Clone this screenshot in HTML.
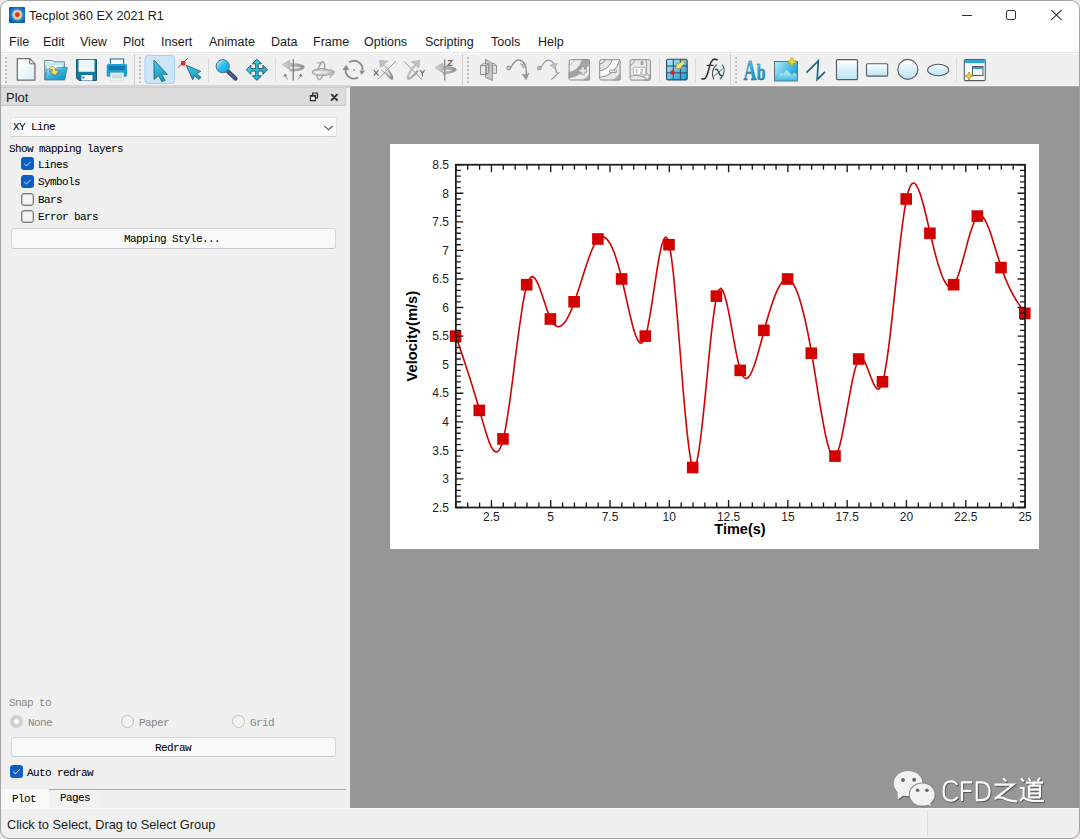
<!DOCTYPE html>
<html><head><meta charset="utf-8">
<style>
*{margin:0;padding:0;box-sizing:border-box}
html,body{width:1080px;height:839px;overflow:hidden;background:#ebe8e6}
body{position:relative;font-family:"Liberation Sans",sans-serif;color:#000}
.a{position:absolute}
.ui{font-family:"Liberation Sans",sans-serif;font-size:12.5px;color:#1a1a1a;white-space:nowrap}
.mono{font-family:"Liberation Mono",monospace;font-size:11px;line-height:12px;letter-spacing:-0.6px;white-space:nowrap;color:#000;-webkit-text-stroke:0.05px currentColor}
#win{position:absolute;left:0;top:0;width:1080px;height:839px;border-radius:9px;overflow:hidden;background:#fff}
#bd{position:absolute;left:0;top:0;width:1080px;height:839px;border:1px solid #a4a4a4;border-radius:9px;pointer-events:none}
</style></head><body>
<div id="win">
<!-- title bar -->
<svg class="a" style="left:9px;top:7px" width="16" height="16" viewBox="0 0 16 16">
 <defs><radialGradient id="tg" cx="0.52" cy="0.48" r="0.62"><stop offset="0" stop-color="#ff4040"/><stop offset="0.17" stop-color="#e01c1c"/><stop offset="0.27" stop-color="#f0a878"/><stop offset="0.37" stop-color="#f0e48c"/><stop offset="0.5" stop-color="#5ab4e0"/><stop offset="0.64" stop-color="#1a76c6"/><stop offset="1" stop-color="#0a56a6"/></radialGradient></defs>
 <rect x="0" y="0" width="16" height="16" rx="1" fill="url(#tg)"/>
</svg>
<div class="a ui" style="left:29px;top:9px;font-size:12.5px">Tecplot 360 EX 2021 R1</div>
<!-- window controls -->
<div class="a" style="left:962px;top:15px;width:10px;height:1px;background:#333"></div>
<div class="a" style="left:1006px;top:10px;width:10px;height:10px;border:1px solid #333;border-radius:2px"></div>
<svg class="a" style="left:1050px;top:9px" width="13" height="12" viewBox="0 0 13 12"><path d="M1.3 1.1 L11.6 10.9 M11.6 1.1 L1.3 10.9" stroke="#333" stroke-width="1.1"/></svg>

<!-- menu -->
<div class="a ui" style="left:9px;top:35px">File</div>
<div class="a ui" style="left:43px;top:35px">Edit</div>
<div class="a ui" style="left:80px;top:35px">View</div>
<div class="a ui" style="left:123px;top:35px">Plot</div>
<div class="a ui" style="left:161px;top:35px">Insert</div>
<div class="a ui" style="left:209px;top:35px">Animate</div>
<div class="a ui" style="left:271px;top:35px">Data</div>
<div class="a ui" style="left:313px;top:35px">Frame</div>
<div class="a ui" style="left:364px;top:35px">Options</div>
<div class="a ui" style="left:425px;top:35px">Scripting</div>
<div class="a ui" style="left:491px;top:35px">Tools</div>
<div class="a ui" style="left:538px;top:35px">Help</div>

<!-- toolbar -->
<div class="a" style="left:0;top:52px;width:1080px;height:1px;background:#e9e9e9"></div>
<div class="a" style="left:0;top:53px;width:1080px;height:1px;background:#fbfbfb"></div>
<div class="a" style="left:0;top:54px;width:1080px;height:32px;background:#f0f0f0"></div>
<svg class="a" style="left:0;top:0" width="1080" height="90" viewBox="0 0 1080 90">
<defs>
 <linearGradient id="docg" x1="0" y1="0" x2="1" y2="1"><stop offset="0.2" stop-color="#ffffff"/><stop offset="1" stop-color="#d6ecf6"/></linearGradient>
 <linearGradient id="fold" x1="0" y1="0" x2="0" y2="1"><stop offset="0" stop-color="#5cc4e4"/><stop offset="1" stop-color="#0a8cc8"/></linearGradient>
 <linearGradient id="teal" x1="0" y1="0" x2="0" y2="1"><stop offset="0" stop-color="#48c8e6"/><stop offset="1" stop-color="#1496c4"/></linearGradient>
 <linearGradient id="lens" x1="0" y1="0" x2="1" y2="1"><stop offset="0" stop-color="#d4f4ff"/><stop offset="0.5" stop-color="#27bdf0"/><stop offset="1" stop-color="#0ea6e6"/></linearGradient>
 <linearGradient id="shp" x1="0" y1="0" x2="0" y2="1"><stop offset="0" stop-color="#ffffff"/><stop offset="1" stop-color="#b7e3f4"/></linearGradient>
 <linearGradient id="grid" x1="0" y1="0" x2="1" y2="1"><stop offset="0" stop-color="#b6ecfb"/><stop offset="1" stop-color="#149ed6"/></linearGradient>
 <linearGradient id="gray" x1="0" y1="0" x2="1" y2="1"><stop offset="0" stop-color="#e8e8e8"/><stop offset="1" stop-color="#9a9a9a"/></linearGradient>
</defs>
<!-- toolbar frame lines -->
<rect x="0" y="85" width="350" height="3" fill="#d6d6d6"/><rect x="0" y="87" width="350" height="1" fill="#cdcdcd"/><rect x="350" y="85" width="730" height="1" fill="#f3f3f3"/>
<!-- grips -->
<g fill="#a6a6a6" transform="translate(0.3,0.3)">
 <rect x="5" y="57" width="1.6" height="1.6"/><rect x="5" y="61" width="1.6" height="1.6"/><rect x="5" y="65" width="1.6" height="1.6"/><rect x="5" y="69" width="1.6" height="1.6"/><rect x="5" y="73" width="1.6" height="1.6"/><rect x="5" y="77" width="1.6" height="1.6"/><rect x="5" y="81" width="1.6" height="1.6"/>
 <rect x="139" y="57" width="1.6" height="1.6"/><rect x="139" y="61" width="1.6" height="1.6"/><rect x="139" y="65" width="1.6" height="1.6"/><rect x="139" y="69" width="1.6" height="1.6"/><rect x="139" y="73" width="1.6" height="1.6"/><rect x="139" y="77" width="1.6" height="1.6"/><rect x="139" y="81" width="1.6" height="1.6"/>
 <rect x="467" y="57" width="1.6" height="1.6"/><rect x="467" y="61" width="1.6" height="1.6"/><rect x="467" y="65" width="1.6" height="1.6"/><rect x="467" y="69" width="1.6" height="1.6"/><rect x="467" y="73" width="1.6" height="1.6"/><rect x="467" y="77" width="1.6" height="1.6"/><rect x="467" y="81" width="1.6" height="1.6"/>
 <rect x="735" y="57" width="1.6" height="1.6"/><rect x="735" y="61" width="1.6" height="1.6"/><rect x="735" y="65" width="1.6" height="1.6"/><rect x="735" y="69" width="1.6" height="1.6"/><rect x="735" y="73" width="1.6" height="1.6"/><rect x="735" y="77" width="1.6" height="1.6"/><rect x="735" y="81" width="1.6" height="1.6"/>
</g>
<!-- toolbar separators (end of toolbars) -->
<g fill="#d0d0d0">
 <rect x="134" y="53" width="1" height="32"/>
 <rect x="462" y="53" width="1" height="32"/>
 <rect x="730" y="53" width="1" height="32"/>
</g>
<g fill="#dcdcdc">
 <rect x="208" y="58" width="1" height="24"/>
 <rect x="275" y="58" width="1" height="24"/>
 <rect x="659" y="58" width="1" height="24"/>
 <rect x="695" y="58" width="1" height="24"/>
 <rect x="956" y="58" width="1" height="24"/>
</g>
<!-- new doc -->
<path d="M17.3,58.6 H29.6 L34.9,63.9 V80.2 H17.3 Z" fill="url(#docg)" stroke="#6e6e6e" stroke-width="1.3" stroke-linejoin="round"/>
<path d="M29.6,58.8 V63.8 H34.7 Z" fill="#dfeef2" stroke="#5e6a6c" stroke-width="0.9" stroke-linejoin="round"/>
<!-- open folder -->
<defs>
 <linearGradient id="fback" x1="0" y1="0" x2="0" y2="1"><stop offset="0" stop-color="#e6fcff"/><stop offset="0.4" stop-color="#7ad8ea"/><stop offset="1" stop-color="#2aa8cc"/></linearGradient>
 <linearGradient id="ffront" x1="0" y1="0" x2="1" y2="1"><stop offset="0" stop-color="#d6f4fb"/><stop offset="0.45" stop-color="#40b4e0"/><stop offset="1" stop-color="#0088c8"/></linearGradient>
 <linearGradient id="farrow" x1="0" y1="0" x2="0" y2="1"><stop offset="0" stop-color="#fff4b0"/><stop offset="1" stop-color="#f0d020"/></linearGradient>
</defs>
<path d="M44.6,60.5 H52.8 L54,61.8 H64.4 V79.8 H44.6 Z" fill="url(#fback)" stroke="#6a7e86" stroke-width="0.9" stroke-linejoin="round"/>
<rect x="46.9" y="65" width="15.2" height="4" fill="#ffffff"/>
<path d="M44.8,79.8 L47.2,69 H55 L57.5,67.4 H67.3 L64.8,79.8 Z" fill="url(#ffront)" stroke="#4a7a90" stroke-width="0.7" stroke-linejoin="round"/>
<path d="M49.2,68.2 Q50.8,65.6 53.5,66.6 Q55.2,67.6 55.6,70.6 L59.4,70.4 L54.9,75.6 L49.3,71.2 L52.8,71 Q52.6,69 50.6,69.4 Z" fill="url(#farrow)" stroke="#6a6030" stroke-width="0.6" stroke-linejoin="round"/>
<!-- save -->
<path d="M76.5,59.5 H96.5 V80.5 H79 L76.5,78 Z" fill="#137a9c" stroke="#0e5c78" stroke-width="1"/>
<rect x="78.5" y="59.8" width="16" height="12" fill="#eaf6f8"/>
<rect x="81.5" y="75" width="11" height="5.5" fill="#ffffff"/>
<rect x="82.5" y="76.5" width="2" height="2" fill="#137a9c"/>
<!-- print -->
<rect x="110.4" y="59" width="13.2" height="5.5" fill="#ffffff" stroke="#1a7698" stroke-width="1.1"/>
<rect x="106.7" y="64" width="20.3" height="12.8" rx="1.5" fill="#1e9fd8"/>
<rect x="108.5" y="66" width="16.5" height="4" fill="#147aa8"/>
<rect x="110.5" y="73" width="13" height="7.8" fill="#f4f6f6" stroke="#d6dcdc" stroke-width="0.8"/>
<rect x="112" y="74.5" width="10" height="4" fill="#c9dcdc"/>
<!-- select (active) -->
<rect x="145" y="55.5" width="29.5" height="28" rx="3" fill="#cce6f8" stroke="#9fd2f8" stroke-width="1"/>
<path d="M154,60 V79.5 L158.5,75.5 L162,81.8 L165,80.3 L161.5,74 L167.4,74.4 Z" fill="url(#teal)" stroke="#22607a" stroke-width="0.85" stroke-linejoin="round"/>
<!-- select2 -->
<path d="M178,67.5 L188,58" stroke="#333" stroke-width="0.8"/>
<rect x="181" y="61" width="4.5" height="4.5" rx="1" fill="#e8281e"/>
<path d="M186.2,65.2 L192.7,79.8 L194.5,75.8 L199,79.5 L201,77.2 L196.6,73.6 L200.8,71.4 Z" fill="url(#teal)" stroke="#22607a" stroke-width="0.85" stroke-linejoin="round"/>
<!-- zoom -->
<path d="M227.5,71 L235.5,78.5" stroke="#2a3550" stroke-width="4.2" stroke-linecap="round"/>
<path d="M227.5,71 L235.5,78.5" stroke="#4a5c90" stroke-width="2.4" stroke-linecap="round"/>
<circle cx="222.7" cy="66.2" r="6.6" fill="url(#lens)" stroke="#4a6070" stroke-width="0.9"/>
<!-- move -->
<defs><linearGradient id="mvg" x1="0" y1="0" x2="1" y2="1"><stop offset="0" stop-color="#50d8ea"/><stop offset="1" stop-color="#10a0d8"/></linearGradient></defs>
<path d="M256.90,59.20 L261.50,63.80 L258.15,63.80 L258.15,68.55 L262.90,68.55 L262.90,65.20 L267.50,69.80 L262.90,74.40 L262.90,71.05 L258.15,71.05 L258.15,75.80 L261.50,75.80 L256.90,80.40 L252.30,75.80 L255.65,75.80 L255.65,71.05 L250.90,71.05 L250.90,74.40 L246.30,69.80 L250.90,65.20 L250.90,68.55 L255.65,68.55 L255.65,63.80 L252.30,63.80Z" fill="url(#mvg)" stroke="#22505c" stroke-width="0.9" stroke-linejoin="miter"/>
<!-- rotate gray icons -->
<defs>
 <linearGradient id="ga" x1="0" y1="0" x2="1" y2="0"><stop offset="0" stop-color="#d4d4d4"/><stop offset="1" stop-color="#8e8e8e"/></linearGradient>
 <linearGradient id="gc" x1="0" y1="0" x2="1" y2="0"><stop offset="0" stop-color="#f0f0f0"/><stop offset="0.6" stop-color="#e0e0e0"/><stop offset="1" stop-color="#a0a0a0"/></linearGradient>
 <linearGradient id="gb" x1="0" y1="0" x2="1" y2="1"><stop offset="0" stop-color="#e0e0e0"/><stop offset="1" stop-color="#8a8a8a"/></linearGradient>
</defs>
<!-- rot1 -->
<path d="M282.4,64.7 L289.7,60 V63.2 Q300,63.3 303.8,65.8 Q306,68.5 300.5,70.2 Q296,71.2 290,71.2 V69.3 Q297,69 300,68 Q301.5,67.3 299.5,66.8 Q296,66.2 289.7,66.2 V69.4 Z" fill="url(#ga)" stroke="#9a9a9a" stroke-width="0.5"/>
<path d="M293.3,59.2 V80.6" stroke="#828282" stroke-width="1.4"/>
<path d="M285.2,73.5 L283.2,76.2 H287 Z M300.8,73.5 L298.9,76.2 H302.7 Z" fill="#7a7a7a"/>
<path d="M285.3,76 Q285.8,78 288,79.2 M300.7,76 Q300,78 297.8,79.2" fill="none" stroke="#8a8a8a" stroke-width="0.9"/>
<!-- rot2 -->
<path d="M316.8,63.3 L323.6,61.6" fill="none" stroke="#a8a8a8" stroke-width="1"/>
<ellipse cx="321" cy="70.8" rx="3" ry="9" transform="rotate(14 321 70.8)" fill="none" stroke="#a4a4a4" stroke-width="1.3"/>

<ellipse cx="321.5" cy="72.2" rx="9.3" ry="3.6" fill="none" stroke="#a2a2a2" stroke-width="1.1"/>
<path d="M314,70.3 H330.2 V68.9 L334.9,71.9 L330.2,77.8 V74.2 H314 Z" fill="url(#gc)" stroke="#a0a0a0" stroke-width="0.6"/>
<!-- rot3 -->
<g fill="none" stroke="#8c8c8c" stroke-width="1.9">
 <path d="M345.6,69.5 A8.4,8.4 0 0 0 358.2,77.4"/>
 <path d="M349.3,62.3 A8.4,8.4 0 0 1 362.4,70.2"/>
</g>
<path d="M346.1,64.8 L342.4,69.9 H349.3 Z M359.4,70.4 H365.3 L361.6,75 Z" fill="#8c8c8c"/>
<circle cx="354.2" cy="70" r="1.1" fill="#a0a0a0"/>
<!-- rot x -->
<path d="M378,79.4 L395.8,61.1" stroke="#8c8c8c" stroke-width="0.9"/>
<path d="M382.5,63.5 Q389,70 391.5,75.5 Q393,79 391.5,78.5 Q388.5,77 385.5,72.5" fill="none" stroke="url(#gb)" stroke-width="2.2"/>
<path d="M379.7,60.3 L388,61.3 L385.5,62.8 L382.5,66.5 L380,67 Z" fill="#c0c0c0" stroke="#a0a0a0" stroke-width="0.5"/>
<path d="M381.3,69.8 L385.6,73.6" stroke="#8c8c8c" stroke-width="0.9"/>
<path d="M373.8,70.2 L378.6,75.6 M378.6,70.2 L373.8,75.6" stroke="#6e6e6e" stroke-width="1.2"/>
<!-- rot y -->
<path d="M404.2,61.4 L421.9,79.7" stroke="#8c8c8c" stroke-width="0.9"/>
<path d="M416.5,63.5 Q411,69 408.5,74.5 Q407,79 408.5,78.8 Q412,78 418,70.5" fill="none" stroke="url(#gb)" stroke-width="2.2"/>
<path d="M419.7,60.3 L411.3,61.9 L414,63.5 L417,66.8 L419,67.5 Z" fill="#c0c0c0" stroke="#a0a0a0" stroke-width="0.5"/>
<path d="M420.2,70.2 L422.4,73.2 L424.6,70.2 M422.4,73.2 V76.2" fill="none" stroke="#6e6e6e" stroke-width="1.2"/>
<!-- rot z -->
<path d="M435,67.8 L442.8,63 V66 Q452,66.3 455.5,68.3 Q458,70.5 453,72.3 Q448,73.8 443.3,74.4 V72 Q449,71.5 452.5,70.5 Q453.5,69.8 451.5,69.5 Q448,69.2 442.8,69.6 V72.8 Z" fill="url(#ga)" stroke="#9a9a9a" stroke-width="0.5"/>
<path d="M444.7,59.2 V80.6" stroke="#8a8a8a" stroke-width="1.3"/>
<path d="M447.8,60.6 H452.2 L447.8,65.4 H452.4" fill="none" stroke="#6e6e6e" stroke-width="1.2"/>
<!-- slice -->
<g stroke="#7c7c7c" stroke-width="0.8" stroke-linejoin="round">
 <path d="M492.3,63.3 L494,63.3 L496.5,65.5 V73.3 H492.3 Z" fill="#dcdcdc"/>
 <path d="M492.3,65.5 H496.5" fill="none" stroke="#a0a0a0"/>
 <path d="M485.4,59.2 L492.3,63.3 V80.6 L485.4,77.2 Z" fill="#c8c8c8"/>
 <path d="M480.5,65.6 L483,63.8 H488.7 V72.6 L486,74.5 H480.5 Z" fill="#e6e6e6"/>
 <path d="M486,65.6 L488.7,63.8 V72.6 L486,74.5 Z" fill="#cfcfcf"/>
 <path d="M480.5,65.6 H486 V74.5" fill="none"/>
</g>
<!-- streamtrace 1 -->
<g fill="none" stroke="#8c8c8c">
 <rect x="507" y="66.3" width="3.6" height="3.5" rx="0.8" fill="#c8c8c8" stroke="#8a8a8a" stroke-width="0.9"/>
 <path d="M510.6,67.8 Q515,60 518.5,60 Q523,60 525.5,66 Q526.8,70 526.3,75" stroke-width="1.3"/>
 <path d="M520.3,63.6 L523.6,68.4 L526.6,63.3 L524.8,65.3 Z" fill="#bdbdbd" stroke="#9a9a9a" stroke-width="0.6"/>
 <path d="M522,74.2 L526.2,79.7 L529,73 L526.3,75 Z" fill="#9a9a9a" stroke="#8c8c8c" stroke-width="0.6"/>
</g>
<!-- streamtrace 2 -->
<g fill="none" stroke="#999">
 <rect x="537.5" y="66.3" width="3.6" height="3.5" rx="1" fill="#b8b8b8" stroke="#999" stroke-width="0.9"/>
 <path d="M541,67.5 Q545,59.8 548.7,60.2 Q552.7,60.6 554.8,66.2 Q556,70 556.5,73" stroke-width="1.3"/>
 <path d="M550.2,65.2 L557.6,63.3 L554.6,68.6 Z" fill="#c4c4c4" stroke="#a0a0a0" stroke-width="0.6"/>
 <path d="M559.2,72.3 L551.4,79.6" stroke-width="1.3"/>
</g>
<!-- contour add -->
<defs>
 <clipPath id="cb1"><rect x="568.6" y="59.2" width="21.4" height="21.3" rx="1.5"/></clipPath>
 <clipPath id="cb2"><rect x="599.2" y="59.2" width="21.4" height="21.3" rx="1.5"/></clipPath>
 <clipPath id="cb3"><rect x="629.6" y="59.2" width="21.3" height="21.4" rx="1.5"/></clipPath>
</defs>
<g clip-path="url(#cb1)">
 <rect x="568" y="58" width="23" height="23" fill="#ececec"/>
 <path d="M568,72 Q578,71.5 582.5,58.5 L590.5,58.5 V61 Q585,76 568,78.2 Z" fill="#a3a3a3"/>
 <path d="M568,64.5 Q573,64 575,58.5" fill="none" stroke="#7e7e7e" stroke-width="0.9"/>
 <path d="M582,81 L591,72.5 V81 Z" fill="#b2b2b2"/>
 <path d="M568,58 H575 Q573,64 568,64.5Z" fill="#f6f6f6"/>
</g>
<rect x="569.1" y="59.7" width="20.4" height="20.3" rx="1.5" fill="none" stroke="#8e8e8e" stroke-width="1"/>
<path d="M581.3,66.8 H584.3 V69.2 H586.7 V72.2 H584.3 V74.6 H581.3 V72.2 H578.9 V69.2 H581.3Z" fill="#e6e6e6" stroke="#8a8a8a" stroke-width="0.7" stroke-linejoin="round"/>
<!-- contour remove -->
<g clip-path="url(#cb2)">
 <rect x="598" y="58" width="23" height="23" fill="#e6e6e6"/>
 <path d="M598,71 Q609,70.5 612.8,58.5 H620 Q616,76 598,77.7Z" fill="#fbfbfb"/>
 <path d="M598,71 Q609,70.5 612.8,58.5 M598,77.7 Q616,76 620,58.5 M598,64.3 Q604,64 606.1,58.5" fill="none" stroke="#7e7e7e" stroke-width="0.9"/>
 <path d="M612,81 L621,72.5 V81 Z" fill="#b2b2b2"/>
</g>
<rect x="599.7" y="59.7" width="20.4" height="20.3" rx="1.5" fill="none" stroke="#8e8e8e" stroke-width="1"/>
<rect x="609.5" y="70" width="7" height="2.5" rx="0.6" fill="#e2e2e2" stroke="#808080" stroke-width="0.7"/>
<!-- contour label -->
<g clip-path="url(#cb3)">
 <rect x="629" y="58" width="23" height="23" fill="#e8e8e8"/>
 <path d="M629,66.5 Q633,65 636,58.5 M645,58.5 Q648,64 646.5,68 Q645,74 651,78 M629,76.5 Q636,74 642,76.5 Q647,78.5 651,75" fill="none" stroke="#8a8a8a" stroke-width="0.8"/>
 <path d="M643,81 L651.5,73 V81 Z" fill="#b8b8b8"/>
</g>
<rect x="630.1" y="59.7" width="20.3" height="20.4" rx="1.5" fill="none" stroke="#8e8e8e" stroke-width="1"/>
<path d="M641,61.5 h2 v3 h-2z" fill="#bbb" stroke="#888" stroke-width="0.6"/>
<rect x="633.4" y="67.3" width="12.3" height="7.5" rx="1.2" fill="#fdfdfd" stroke="#9a9a9a" stroke-width="0.7"/>
<path d="M636.8,69.2 V73.2 M636,69.9 L636.8,69.2 M640.4,69.9 Q641,69.1 641.8,69.2 Q642.8,69.4 642.5,70.5 L640.4,73.2 H642.8" fill="none" stroke="#808080" stroke-width="0.75"/>
<path d="M645.9,73.8 H648.1 V75.6 H649.9 V77.8 H648.1 V79.6 H645.9 V77.8 H644.1 V75.6 H645.9Z" fill="#f0f0f0" stroke="#8a8a8a" stroke-width="0.6" stroke-linejoin="round"/>
<!-- probe grid -->
<rect x="666.6" y="59.3" width="20.6" height="20.6" rx="1.5" fill="url(#grid)" stroke="#2e4664" stroke-width="1.1"/>
<path d="M673.3,59.5 V79.8 M680.4,59.5 V79.8 M666.8,66 H687 M666.8,72.9 H687" stroke="#2e4664" stroke-width="1"/>
<path d="M675.9,68.6 L676.8,62.8 L678.2,64.4 L682.6,60.6 L685,63.2 L680.7,67.2 L682.2,68.5 Z" fill="#f4e36a" stroke="#9a8a30" stroke-width="0.6" stroke-linejoin="round"/>
<circle cx="672.6" cy="72.5" r="2.2" fill="#e41c1c"/>
<!-- f(x) -->
<g fill="none" stroke-linecap="round">
 <path d="M717.2,59.8 Q713.5,57.8 711.2,61.8 Q710,64 708.6,70 Q707.4,75.5 705.5,78 Q704,79.6 701.8,78.8" stroke="#2e2e2e" stroke-width="1.5"/>
 <path d="M707.2,65.4 H713.2" stroke="#333" stroke-width="1.1"/>
 <path d="M716.4,64.9 Q710.2,71 713.6,79" stroke="#444" stroke-width="1.1"/>
 <path d="M715.8,69.4 Q717.5,69 718.2,71 L720,74.8 Q720.6,75.8 721.6,75.4" stroke="#1e5464" stroke-width="1.5"/>
 <path d="M722.4,69.2 L714.6,75.6" stroke="#2a6a7c" stroke-width="0.9"/>
 <path d="M722.6,65 Q726.8,72 720.2,79" stroke="#2e5e70" stroke-width="1.1"/>
</g>
<!-- Ab -->
<defs><linearGradient id="abg" x1="0" y1="0" x2="0" y2="1"><stop offset="0" stop-color="#7ad6f2"/><stop offset="0.5" stop-color="#2aa6d4"/><stop offset="1" stop-color="#1a7fb0"/></linearGradient></defs>
<text transform="translate(743.4,79.8) scale(0.62,1)" x="0" y="0" font-family="Liberation Serif" font-weight="bold" font-size="29" fill="url(#abg)" stroke="#2a6a80" stroke-width="0.5">A</text>
<text transform="translate(756.8,79.8) scale(0.7,1)" x="0" y="0" font-family="Liberation Serif" font-weight="bold" font-size="22.5" fill="url(#abg)" stroke="#2a6a80" stroke-width="0.5">b</text>
<!-- image -->
<defs>
 <linearGradient id="imgg" x1="0" y1="0" x2="1" y2="0.6"><stop offset="0" stop-color="#b0ecff"/><stop offset="1" stop-color="#18a2d6"/></linearGradient>
 <linearGradient id="mtg" x1="0" y1="0" x2="0" y2="1"><stop offset="0" stop-color="#d0f6fe"/><stop offset="1" stop-color="#38bce6"/></linearGradient>
</defs>
<rect x="774.5" y="61.5" width="23" height="19.5" fill="url(#imgg)" stroke="#6e6e6e" stroke-width="1"/>
<path d="M775,77.5 L781.1,72.2 L783,73.3 L786.7,69.7 L791.7,74.4 L794.4,72.8 L797,74.2 V80.5 H775Z" fill="url(#mtg)" stroke="#5a9ab8" stroke-width="0.5"/>
<path d="M790.7,58.3 H793.1 V60.7 H795.5 V63.1 H793.1 V65.5 H790.7 V63.1 H788.3 V60.7 H790.7Z" fill="#f4dc28" stroke="#9a8a20" stroke-width="0.6" stroke-linejoin="round"/>
<!-- polyline -->
<path d="M806.5,72.7 L818.3,61 L817.2,79.5 L825,71.8" fill="none" stroke="#1a6680" stroke-width="1.7"/>
<!-- square -->
<rect x="836.5" y="59.6" width="21" height="20" rx="1" fill="url(#shp)" stroke="#555b66" stroke-width="1.2"/>
<rect x="866.5" y="63.8" width="21.2" height="12.3" rx="1" fill="url(#shp)" stroke="#555b66" stroke-width="1.1"/>
<circle cx="907.8" cy="69.4" r="10" fill="url(#shp)" stroke="#555b66" stroke-width="1.1"/>
<ellipse cx="938.2" cy="70" rx="10.6" ry="5.8" fill="url(#shp)" stroke="#555b66" stroke-width="1.1"/>
<!-- frame icon -->
<rect x="964.3" y="59.6" width="21" height="21" rx="1" fill="#fafafa" stroke="#555b66" stroke-width="1.1"/>
<rect x="964.8" y="60.1" width="20" height="3" fill="#27a6de"/>
<rect x="972.5" y="66.5" width="10.5" height="9" fill="#f8f8f8" stroke="#555b66" stroke-width="1"/>
<rect x="973" y="67" width="9.5" height="2" fill="#27a6de"/>
<path d="M969,72 L970.3,74.7 L973,76 L970.3,77.3 L969,80 L967.7,77.3 L965,76 L967.7,74.7Z" fill="#f0d020" stroke="#8a7a20" stroke-width="0.6"/>
</svg>


<!-- left panel -->
<div class="a" style="left:0;top:88px;width:350px;height:720px;background:#f0f0f0"></div>
<div class="a" style="left:1px;top:88px;width:345px;height:18px;background:#dcdcdc;border-right:1px solid #cbcbcb;border-bottom:1px solid #c8c8c8"></div>
<div class="a ui" style="left:6px;top:90px;font-size:13px;color:#222">Plot</div>
<svg class="a" style="left:309px;top:92px" width="10" height="10" viewBox="0 0 10 10"><path d="M3.6 3.2V1h4.9v4.9H6.6" fill="#c8c8c8" stroke="#2a2a2a" stroke-width="1.1"/><path d="M1.4 3.6h5v5h-5z" fill="#eaeaea" stroke="#2a2a2a" stroke-width="1.1"/><path d="M1.4 4.1h5" stroke="#2a2a2a" stroke-width="1.2"/></svg>
<svg class="a" style="left:330px;top:93px" width="9" height="9" viewBox="0 0 9 9"><path d="M1.7 1.7L7 7M7 1.7L1.7 7" stroke="#2e2e2e" stroke-width="1.8" stroke-linecap="round"/></svg>

<div class="a" style="left:10px;top:117px;width:327px;height:20px;background:#fbfbfb;border:1px solid #e2e2e2;border-bottom-color:#cfcfcf;border-radius:2px"></div>
<div class="a mono" style="left:13px;top:121px">XY Line</div>
<svg class="a" style="left:323px;top:125px" width="11" height="6" viewBox="0 0 11 6"><path d="M1.3 1L5.5 4.6L9.7 1" fill="none" stroke="#666" stroke-width="1.2"/></svg>

<div class="a mono" style="left:9px;top:143px">Show mapping layers</div>
<div class="a" style="left:21px;top:157px;width:13px;height:13px;border-radius:3px;background:#0a5fc2"></div><svg class="a" style="left:21px;top:157px" width="13" height="13" viewBox="0 0 13 13"><path d="M3.3 7L5.5 9L9.6 4.8" fill="none" stroke="#d8e6f6" stroke-width="1"/></svg><div class="a mono" style="left:38px;top:159px">Lines</div><div class="a" style="left:21px;top:175px;width:13px;height:13px;border-radius:3px;background:#0a5fc2"></div><svg class="a" style="left:21px;top:175px" width="13" height="13" viewBox="0 0 13 13"><path d="M3.3 7L5.5 9L9.6 4.8" fill="none" stroke="#d8e6f6" stroke-width="1"/></svg><div class="a mono" style="left:38px;top:176px">Symbols</div><div class="a" style="left:21px;top:193px;width:13px;height:13px;border-radius:3px;border:1px solid #7a7a7a;box-shadow:inset 0 0 0 0.4px #9a9a9a;background:#f4f4f4"></div><div class="a mono" style="left:38px;top:194px">Bars</div><div class="a" style="left:21px;top:210px;width:13px;height:13px;border-radius:3px;border:1px solid #7a7a7a;box-shadow:inset 0 0 0 0.4px #9a9a9a;background:#f4f4f4"></div><div class="a mono" style="left:38px;top:211px">Error bars</div>

<div class="a" style="left:11px;top:228px;width:325px;height:21px;background:#f9f9f9;border:1px solid #d6d6d6;border-bottom-color:#c6c6c6;border-radius:3px"></div>
<div class="a mono" style="left:124px;top:233px">Mapping Style...</div>

<div class="a mono" style="left:9px;top:697px;color:#8a8a8a">Snap to</div>
<div class="a" style="left:10px;top:715px;width:13px;height:13px;border-radius:50%;background:#cfcfcf"></div>
<div class="a" style="left:14px;top:719px;width:5px;height:5px;border-radius:50%;background:#fff"></div>
<div class="a mono" style="left:28px;top:717px;color:#8a8a8a">None</div>
<div class="a" style="left:121px;top:715px;width:13px;height:13px;border-radius:50%;border:1px solid #bdbdbd;background:#f3f3f3"></div>
<div class="a mono" style="left:139px;top:717px;color:#8a8a8a">Paper</div>
<div class="a" style="left:232px;top:715px;width:13px;height:13px;border-radius:50%;border:1px solid #bdbdbd;background:#f3f3f3"></div>
<div class="a mono" style="left:250px;top:717px;color:#8a8a8a">Grid</div>

<div class="a" style="left:11px;top:737px;width:325px;height:20px;background:#f9f9f9;border:1px solid #d6d6d6;border-bottom-color:#c6c6c6;border-radius:3px"></div>
<div class="a mono" style="left:155px;top:742px">Redraw</div>

<div class="a" style="left:10px;top:765px;width:13px;height:13px;border-radius:3px;background:#0a5fc2"></div>
<svg class="a" style="left:10px;top:765px" width="13" height="13" viewBox="0 0 13 13"><path d="M3.3 6.8L5.4 8.8L9.8 4.3" fill="none" stroke="#fff" stroke-width="1"/></svg>
<div class="a mono" style="left:27px;top:767px">Auto redraw</div>

<div class="a" style="left:49px;top:789px;width:297px;height:1px;background:#a9a9a9"></div>
<div class="a" style="left:1px;top:789px;width:48px;height:19px;background:#f9f9f9"></div>
<div class="a" style="left:49px;top:790px;width:50px;height:18px;background:#f2f2f2"></div>
<div class="a mono" style="left:12px;top:793px">Plot</div>
<div class="a mono" style="left:60px;top:792px">Pages</div>

<!-- canvas -->
<div class="a" style="left:350px;top:86px;width:730px;height:722px;background:#969696;border-top:1px solid #a8a8a8"></div>
<div class="a" style="left:390px;top:144px;width:649px;height:405px;background:#fff"></div>
<svg class="a" style="left:0;top:0" width="1080" height="839" viewBox="0 0 1080 839">
<g font-family="Liberation Sans" font-size="12" fill="#1e1e1e"><text x="491.4" y="520.7" text-anchor="middle">2.5</text><text x="550.7" y="520.7" text-anchor="middle">5</text><text x="610.0" y="520.7" text-anchor="middle">7.5</text><text x="669.3" y="520.7" text-anchor="middle">10</text><text x="728.6" y="520.7" text-anchor="middle">12.5</text><text x="787.9" y="520.7" text-anchor="middle">15</text><text x="847.2" y="520.7" text-anchor="middle">17.5</text><text x="906.5" y="520.7" text-anchor="middle">20</text><text x="965.8" y="520.7" text-anchor="middle">22.5</text><text x="1025.1" y="520.7" text-anchor="middle">25</text><text x="449.05" y="511.7" text-anchor="end">2.5</text><text x="449.05" y="483.1" text-anchor="end">3</text><text x="449.05" y="454.6" text-anchor="end">3.5</text><text x="449.05" y="426.0" text-anchor="end">4</text><text x="449.05" y="397.4" text-anchor="end">4.5</text><text x="449.05" y="368.9" text-anchor="end">5</text><text x="449.05" y="340.3" text-anchor="end">5.5</text><text x="449.05" y="311.7" text-anchor="end">6</text><text x="449.05" y="283.2" text-anchor="end">6.5</text><text x="449.05" y="254.6" text-anchor="end">7</text><text x="449.05" y="226.0" text-anchor="end">7.5</text><text x="449.05" y="197.5" text-anchor="end">8</text><text x="449.05" y="168.9" text-anchor="end">8.5</text></g>
<text x="740" y="534" text-anchor="middle" font-family="Liberation Sans" font-weight="bold" font-size="14.5" fill="#000">Time(s)</text>
<text transform="translate(417.4,336.2) rotate(-90)" text-anchor="middle" font-family="Liberation Sans" font-weight="bold" font-size="14.7" fill="#000">Velocity(m/s)</text>
<path d="M455.9,336.1 L457.8,341.9 L459.8,347.7 L461.8,353.6 L463.8,359.5 L465.7,365.4 L467.7,371.5 L469.7,377.6 L471.7,383.9 L473.6,390.3 L475.6,396.8 L477.6,403.5 L479.6,410.4 L481.5,417.4 L483.5,424.4 L485.5,431.1 L487.5,437.3 L489.4,442.7 L491.4,447.1 L493.4,450.2 L495.4,451.9 L497.4,451.8 L499.3,449.8 L501.3,445.6 L503.3,438.9 L505.3,429.7 L507.2,418.3 L509.2,405.1 L511.2,390.6 L513.2,375.3 L515.1,359.7 L517.1,344.1 L519.1,329.2 L521.1,315.3 L523.0,303.0 L525.0,292.6 L527.0,284.7 L529.0,279.6 L531.0,277.0 L532.9,276.7 L534.9,278.4 L536.9,281.5 L538.9,285.9 L540.8,291.2 L542.8,297.0 L544.8,303.1 L546.8,309.0 L548.7,314.4 L550.7,319.0 L552.7,322.5 L554.7,324.9 L556.6,326.3 L558.6,326.7 L560.6,326.1 L562.6,324.7 L564.6,322.6 L566.5,319.7 L568.5,316.1 L570.5,311.9 L572.5,307.1 L574.4,301.8 L576.4,296.1 L578.4,290.1 L580.4,283.9 L582.3,277.7 L584.3,271.4 L586.3,265.3 L588.3,259.5 L590.2,254.2 L592.2,249.3 L594.2,245.0 L596.2,241.6 L598.2,239.0 L600.1,237.4 L602.1,236.7 L604.1,237.1 L606.1,238.3 L608.0,240.5 L610.0,243.5 L612.0,247.4 L614.0,252.1 L615.9,257.7 L617.9,264.0 L619.9,271.1 L621.9,279.0 L623.8,287.5 L625.8,296.4 L627.8,305.4 L629.8,314.1 L631.8,322.3 L633.7,329.6 L635.7,335.6 L637.7,340.1 L639.7,342.7 L641.6,343.1 L643.6,341.0 L645.6,336.1 L647.6,328.2 L649.5,317.8 L651.5,305.8 L653.5,292.9 L655.5,279.7 L657.4,267.1 L659.4,255.8 L661.4,246.5 L663.4,240.0 L665.4,237.1 L667.3,238.4 L669.3,244.7 L671.3,256.5 L673.3,273.0 L675.2,293.1 L677.2,315.9 L679.2,340.3 L681.2,365.2 L683.1,389.6 L685.1,412.4 L687.1,432.7 L689.1,449.3 L691.0,461.3 L693.0,467.5 L695.0,467.3 L697.0,461.3 L698.9,450.5 L700.9,435.9 L702.9,418.3 L704.9,398.9 L706.9,378.5 L708.8,358.1 L710.8,338.7 L712.8,321.2 L714.8,306.7 L716.7,296.1 L718.7,290.1 L720.7,288.3 L722.7,290.2 L724.6,295.2 L726.6,302.5 L728.6,311.6 L730.6,322.0 L732.5,332.9 L734.5,343.9 L736.5,354.2 L738.5,363.2 L740.5,370.4 L742.4,375.3 L744.4,377.9 L746.4,378.5 L748.4,377.3 L750.3,374.6 L752.3,370.5 L754.3,365.3 L756.3,359.2 L758.2,352.4 L760.2,345.2 L762.2,337.8 L764.2,330.4 L766.1,323.2 L768.1,316.3 L770.1,309.8 L772.1,303.7 L774.1,298.1 L776.0,293.1 L778.0,288.7 L780.0,285.1 L782.0,282.2 L783.9,280.2 L785.9,279.1 L787.9,279.0 L789.9,279.9 L791.8,281.9 L793.8,284.8 L795.8,288.8 L797.8,293.7 L799.7,299.5 L801.7,306.3 L803.7,314.0 L805.7,322.6 L807.7,332.0 L809.6,342.2 L811.6,353.2 L813.6,365.0 L815.6,377.3 L817.5,389.7 L819.5,401.9 L821.5,413.7 L823.5,424.7 L825.4,434.5 L827.4,443.0 L829.4,449.7 L831.4,454.3 L833.3,456.5 L835.3,456.1 L837.3,452.8 L839.3,446.9 L841.3,439.1 L843.2,429.7 L845.2,419.3 L847.2,408.3 L849.2,397.3 L851.1,386.8 L853.1,377.2 L855.1,369.0 L857.1,362.8 L859.0,359.0 L861.0,357.9 L863.0,359.2 L865.0,362.4 L866.9,366.8 L868.9,371.9 L870.9,377.2 L872.9,382.1 L874.9,386.1 L876.8,388.7 L878.8,389.1 L880.8,387.0 L882.8,381.8 L884.7,373.1 L886.7,361.3 L888.7,346.9 L890.7,330.6 L892.6,312.9 L894.6,294.4 L896.6,275.7 L898.6,257.3 L900.5,239.9 L902.5,224.0 L904.5,210.2 L906.5,199.0 L908.4,190.9 L910.4,185.8 L912.4,183.3 L914.4,183.2 L916.4,185.2 L918.3,189.0 L920.3,194.3 L922.3,200.8 L924.3,208.2 L926.2,216.3 L928.2,224.8 L930.2,233.3 L932.2,241.6 L934.1,249.6 L936.1,257.1 L938.1,264.0 L940.1,270.3 L942.0,275.7 L944.0,280.2 L946.0,283.7 L948.0,286.0 L950.0,287.0 L951.9,286.6 L953.9,284.7 L955.9,281.2 L957.9,276.3 L959.8,270.4 L961.8,263.7 L963.8,256.5 L965.8,249.1 L967.7,241.8 L969.7,234.8 L971.7,228.4 L973.7,223.0 L975.6,218.8 L977.6,216.1 L979.6,215.1 L981.6,215.8 L983.6,217.8 L985.5,221.0 L987.5,225.2 L989.5,230.3 L991.5,236.0 L993.4,242.2 L995.4,248.6 L997.4,255.1 L999.4,261.5 L1001.3,267.6 L1003.5,273.6 L1005.7,279.1 L1007.8,284.2 L1010.0,288.8 L1012.1,293.0 L1014.3,296.9 L1016.4,300.5 L1018.6,303.9 L1020.7,307.1 L1022.9,310.2 L1025.1,313.3" stroke="#d40000" stroke-width="1.6" fill="none"/>
<g fill="#d30000"><rect x="449.8" y="330.3" width="11.6" height="11.6"/><rect x="473.5" y="404.6" width="11.6" height="11.6"/><rect x="497.2" y="433.1" width="11.6" height="11.6"/><rect x="520.9" y="278.9" width="11.6" height="11.6"/><rect x="544.6" y="313.2" width="11.6" height="11.6"/><rect x="568.3" y="296.0" width="11.6" height="11.6"/><rect x="592.1" y="233.2" width="11.6" height="11.6"/><rect x="615.8" y="273.2" width="11.6" height="11.6"/><rect x="639.5" y="330.3" width="11.6" height="11.6"/><rect x="663.2" y="238.9" width="11.6" height="11.6"/><rect x="686.9" y="461.7" width="11.6" height="11.6"/><rect x="710.6" y="290.3" width="11.6" height="11.6"/><rect x="734.4" y="364.6" width="11.6" height="11.6"/><rect x="758.1" y="324.6" width="11.6" height="11.6"/><rect x="781.8" y="273.2" width="11.6" height="11.6"/><rect x="805.5" y="347.4" width="11.6" height="11.6"/><rect x="829.2" y="450.3" width="11.6" height="11.6"/><rect x="852.9" y="353.2" width="11.6" height="11.6"/><rect x="876.7" y="376.0" width="11.6" height="11.6"/><rect x="900.4" y="193.2" width="11.6" height="11.6"/><rect x="924.1" y="227.5" width="11.6" height="11.6"/><rect x="947.8" y="278.9" width="11.6" height="11.6"/><rect x="971.5" y="210.3" width="11.6" height="11.6"/><rect x="995.2" y="261.8" width="11.6" height="11.6"/><rect x="1019.0" y="307.5" width="11.6" height="11.6"/></g>
<path d="M455.85,507.5v-5M455.85,164.71999999999997v5M467.71,507.5v-5M467.71,164.71999999999997v5M479.57,507.5v-5M479.57,164.71999999999997v5M491.43,507.5v-7.5M491.43,164.71999999999997v7.5M503.28,507.5v-5M503.28,164.71999999999997v5M515.14,507.5v-5M515.14,164.71999999999997v5M527.00,507.5v-5M527.00,164.71999999999997v5M538.86,507.5v-5M538.86,164.71999999999997v5M550.72,507.5v-7.5M550.72,164.71999999999997v7.5M562.58,507.5v-5M562.58,164.71999999999997v5M574.44,507.5v-5M574.44,164.71999999999997v5M586.29,507.5v-5M586.29,164.71999999999997v5M598.15,507.5v-5M598.15,164.71999999999997v5M610.01,507.5v-7.5M610.01,164.71999999999997v7.5M621.87,507.5v-5M621.87,164.71999999999997v5M633.73,507.5v-5M633.73,164.71999999999997v5M645.59,507.5v-5M645.59,164.71999999999997v5M657.44,507.5v-5M657.44,164.71999999999997v5M669.30,507.5v-7.5M669.30,164.71999999999997v7.5M681.16,507.5v-5M681.16,164.71999999999997v5M693.02,507.5v-5M693.02,164.71999999999997v5M704.88,507.5v-5M704.88,164.71999999999997v5M716.74,507.5v-5M716.74,164.71999999999997v5M728.60,507.5v-7.5M728.60,164.71999999999997v7.5M740.45,507.5v-5M740.45,164.71999999999997v5M752.31,507.5v-5M752.31,164.71999999999997v5M764.17,507.5v-5M764.17,164.71999999999997v5M776.03,507.5v-5M776.03,164.71999999999997v5M787.89,507.5v-7.5M787.89,164.71999999999997v7.5M799.75,507.5v-5M799.75,164.71999999999997v5M811.61,507.5v-5M811.61,164.71999999999997v5M823.46,507.5v-5M823.46,164.71999999999997v5M835.32,507.5v-5M835.32,164.71999999999997v5M847.18,507.5v-7.5M847.18,164.71999999999997v7.5M859.04,507.5v-5M859.04,164.71999999999997v5M870.90,507.5v-5M870.90,164.71999999999997v5M882.76,507.5v-5M882.76,164.71999999999997v5M894.61,507.5v-5M894.61,164.71999999999997v5M906.47,507.5v-7.5M906.47,164.71999999999997v7.5M918.33,507.5v-5M918.33,164.71999999999997v5M930.19,507.5v-5M930.19,164.71999999999997v5M942.05,507.5v-5M942.05,164.71999999999997v5M953.91,507.5v-5M953.91,164.71999999999997v5M965.77,507.5v-7.5M965.77,164.71999999999997v7.5M977.62,507.5v-5M977.62,164.71999999999997v5M989.48,507.5v-5M989.48,164.71999999999997v5M1001.34,507.5v-5M1001.34,164.71999999999997v5M1013.20,507.5v-5M1013.20,164.71999999999997v5M1025.06,507.5v-7.5M1025.06,164.71999999999997v7.5M455.85,507.50h7.5M1025.058,507.50h-7.5M455.85,501.79h5M1025.058,501.79h-5M455.85,496.07h5M1025.058,496.07h-5M455.85,490.36h5M1025.058,490.36h-5M455.85,484.65h5M1025.058,484.65h-5M455.85,478.94h7.5M1025.058,478.94h-7.5M455.85,473.22h5M1025.058,473.22h-5M455.85,467.51h5M1025.058,467.51h-5M455.85,461.80h5M1025.058,461.80h-5M455.85,456.08h5M1025.058,456.08h-5M455.85,450.37h7.5M1025.058,450.37h-7.5M455.85,444.66h5M1025.058,444.66h-5M455.85,438.94h5M1025.058,438.94h-5M455.85,433.23h5M1025.058,433.23h-5M455.85,427.52h5M1025.058,427.52h-5M455.85,421.81h7.5M1025.058,421.81h-7.5M455.85,416.09h5M1025.058,416.09h-5M455.85,410.38h5M1025.058,410.38h-5M455.85,404.67h5M1025.058,404.67h-5M455.85,398.95h5M1025.058,398.95h-5M455.85,393.24h7.5M1025.058,393.24h-7.5M455.85,387.53h5M1025.058,387.53h-5M455.85,381.81h5M1025.058,381.81h-5M455.85,376.10h5M1025.058,376.10h-5M455.85,370.39h5M1025.058,370.39h-5M455.85,364.67h7.5M1025.058,364.67h-7.5M455.85,358.96h5M1025.058,358.96h-5M455.85,353.25h5M1025.058,353.25h-5M455.85,347.54h5M1025.058,347.54h-5M455.85,341.82h5M1025.058,341.82h-5M455.85,336.11h7.5M1025.058,336.11h-7.5M455.85,330.40h5M1025.058,330.40h-5M455.85,324.68h5M1025.058,324.68h-5M455.85,318.97h5M1025.058,318.97h-5M455.85,313.26h5M1025.058,313.26h-5M455.85,307.54h7.5M1025.058,307.54h-7.5M455.85,301.83h5M1025.058,301.83h-5M455.85,296.12h5M1025.058,296.12h-5M455.85,290.41h5M1025.058,290.41h-5M455.85,284.69h5M1025.058,284.69h-5M455.85,278.98h7.5M1025.058,278.98h-7.5M455.85,273.27h5M1025.058,273.27h-5M455.85,267.55h5M1025.058,267.55h-5M455.85,261.84h5M1025.058,261.84h-5M455.85,256.13h5M1025.058,256.13h-5M455.85,250.41h7.5M1025.058,250.41h-7.5M455.85,244.70h5M1025.058,244.70h-5M455.85,238.99h5M1025.058,238.99h-5M455.85,233.28h5M1025.058,233.28h-5M455.85,227.56h5M1025.058,227.56h-5M455.85,221.85h7.5M1025.058,221.85h-7.5M455.85,216.14h5M1025.058,216.14h-5M455.85,210.42h5M1025.058,210.42h-5M455.85,204.71h5M1025.058,204.71h-5M455.85,199.00h5M1025.058,199.00h-5M455.85,193.28h7.5M1025.058,193.28h-7.5M455.85,187.57h5M1025.058,187.57h-5M455.85,181.86h5M1025.058,181.86h-5M455.85,176.15h5M1025.058,176.15h-5M455.85,170.43h5M1025.058,170.43h-5M455.85,164.72h7.5M1025.058,164.72h-7.5" stroke="#1c1c1c" stroke-width="1.35" fill="none"/>
<rect x="455.85" y="164.71999999999997" width="569.208" height="342.78000000000003" fill="none" stroke="#1c1c1c" stroke-width="1.75"/>
</svg>

<!-- watermark -->
<svg class="a" style="left:880px;top:762px" width="180" height="48" viewBox="880 762 180 48">
<defs>
 <filter id="sh" x="-10%" y="-10%" width="120%" height="130%"><feGaussianBlur stdDeviation="0.5"/></filter>
 <g id="wt">
  <path d="M957.2,785 Q955.2,781.3 950.6,781.3 Q943.6,781.3 943.6,791.1 Q943.6,800.7 950.6,800.7 Q955.2,800.7 957.4,797"/>
  <path d="M962,781.5 V801 M961.2,782.3 H972.2 M961.2,790.9 H971.4"/>
  <path d="M976.8,781.5 V800.6 M976,782.3 H981.2 Q989.6,782.3 989.6,791.3 Q989.6,800.2 981.2,800.2 H976"/>
  <path d="M1003.2,778.3 L1006.4,781.6 M994.5,784.6 H1013.2 Q1004,792 994.8,799 M997,797.6 Q1002.5,797 1006,799.2 Q1009.5,801 1017.2,801.4"/>
  <path d="M1021,778.6 L1023.8,781.6 M1019.8,788 H1023.6 V797.2 L1020.2,800.6 M1023.4,797.4 Q1027.5,800.8 1034,801 H1044"/>
  <path d="M1028.5,777.8 L1030.6,781 M1040,777.8 L1037.6,781 M1026,782.6 H1043.2 M1034.6,782.6 L1032.8,785.4 M1029.2,785.6 H1040 V797.4 M1029.2,785.6 V797.4 H1040 M1029.2,789.6 H1040 M1029.2,793.5 H1040"/>
 </g>
</defs>
<g fill="none" stroke="#3a3a3a" stroke-width="2.3" opacity="0.7" transform="translate(0.9,0.9)" filter="url(#sh)"><use href="#wt"/></g>
<g fill="none" stroke="#fbfbfb" stroke-width="2.2"><use href="#wt"/></g>
<!-- wechat logo -->
<g filter="url(#sh)" opacity="0.75" transform="translate(0.6,0.8)">
 <ellipse cx="908.2" cy="783.6" rx="14.6" ry="12.9" fill="#3c3c3c"/>
 <path d="M897.5,791 L898,800 L905,794.5Z" fill="#3c3c3c"/>
 <ellipse cx="922.2" cy="794.6" rx="12.6" ry="11.2" fill="#3c3c3c"/>
</g>
<ellipse cx="908.2" cy="783.6" rx="14.4" ry="12.7" fill="#f2f2f2"/>
<path d="M897.5,791 L897.9,799.6 L905,794.5Z" fill="#f2f2f2"/>
<circle cx="903" cy="780" r="2" fill="#6a6a6a"/>
<circle cx="914.2" cy="779.7" r="2" fill="#6a6a6a"/>
<ellipse cx="922.2" cy="794.6" rx="13.4" ry="12" fill="#8a8a8a"/>
<ellipse cx="922.2" cy="794.6" rx="12.4" ry="11" fill="#f2f2f2"/>
<path d="M925.5,803 L930.8,806 L929.5,800Z" fill="#f2f2f2"/>
<circle cx="917.6" cy="790.3" r="1.8" fill="#6a6a6a"/>
<circle cx="926.9" cy="790.3" r="1.8" fill="#6a6a6a"/>
</svg>


<!-- status bar -->
<div class="a" style="left:0;top:808px;width:1080px;height:31px;background:#f0f0f0"></div>
<div class="a" style="left:0;top:808px;width:1080px;height:1px;background:#f8f8f8"></div>
<div class="a" style="left:927px;top:811px;width:1px;height:25px;background:#dcdcdc"></div>
<div class="a ui" style="left:7px;top:816.5px;font-size:12.8px;color:#1a1a1a">Click to Select, Drag to Select Group</div>
</div>
<div id="bd"></div>
</body></html>
